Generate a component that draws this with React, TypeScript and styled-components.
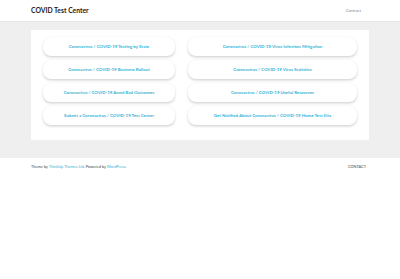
import React from "react";
import styled, { createGlobalStyle } from "styled-components";

const GlobalStyle = createGlobalStyle`
  html, body {
    margin: 0;
    padding: 0;
    background: #ffffff;
    font-family: Lato, "Open Sans", sans-serif;
  }
`;

const Header = styled.header`
  height: 21px;
  background: #fff;
  display: flex;
  align-items: center;
  justify-content: space-between;
  padding: 0 39px 0 31px;
`;

const SiteTitle = styled.div`
  font-size: 6.8px;
  font-weight: 700;
  color: #222;
  margin-top: -1px;
`;

const NavLink = styled.a`
  font-size: 4.4px;
  color: #888;
  text-decoration: none;
`;

const Main = styled.main`
  background: #efefef;
  padding: 9px 31px 18px;
  box-shadow: inset 0 1px 1px rgba(0, 0, 0, 0.03);
`;

const Card = styled.section`
  background: #fff;
  padding: 7px 12px 15px;
  display: grid;
  grid-template-columns: 132fr 169fr;
  column-gap: 13px;
  row-gap: 4px;
`;

const LinkButton = styled.a`
  height: 19px;
  border-radius: 8px;
  background: #fff;
  box-shadow: 0 1.5px 2.5px rgba(0, 0, 0, 0.16), 0 0 1px rgba(0, 0, 0, 0.08);
  display: flex;
  align-items: center;
  justify-content: center;
  color: #2eb4d6;
  font-size: 4.4px;
  font-weight: 700;
  text-decoration: none;
  white-space: nowrap;
`;

const Footer = styled.footer`
  display: flex;
  justify-content: space-between;
  align-items: center;
  padding: 6px 34px 0 31px;
  font-size: 3.9px;
  color: #444;
`;

const Credit = styled.span`
  a {
    color: #2eb4d6;
    text-decoration: none;
  }
`;

const FooterNav = styled.a`
  text-transform: uppercase;
  color: #444;
  text-decoration: none;
`;

const links: [string, string][] = [
  ["Coronavirus / COVID-19 Testing by State", "Coronavirus / COVID-19 Virus Infection Mitigation"],
  ["Coronavirus / COVID-19 Business Rollout", "Coronavirus / COVID-19 Virus Statistics"],
  ["Coronavirus / COVID-19 Avoid Bad Outcomes", "Coronavirus / COVID-19 Useful Resources"],
  ["Submit a Coronavirus / COVID-19 Test Center", "Get Notified About Coronavirus / COVID-19 Home Test Kits"],
];

export default function App() {
  return (
    <>
      <GlobalStyle />
      <Header>
        <SiteTitle>COVID Test Center</SiteTitle>
        <NavLink href="#">Contact</NavLink>
      </Header>
      <Main>
        <Card>
          {links.flat().map((t) => (
            <LinkButton key={t} href="#">
              {t}
            </LinkButton>
          ))}
        </Card>
      </Main>
      <Footer>
        <Credit>
          Theme by <a href="#">ThinkUp Themes Ltd</a>. Powered by <a href="#">WordPress</a>.
        </Credit>
        <FooterNav href="#">Contact</FooterNav>
      </Footer>
    </>
  );
}
